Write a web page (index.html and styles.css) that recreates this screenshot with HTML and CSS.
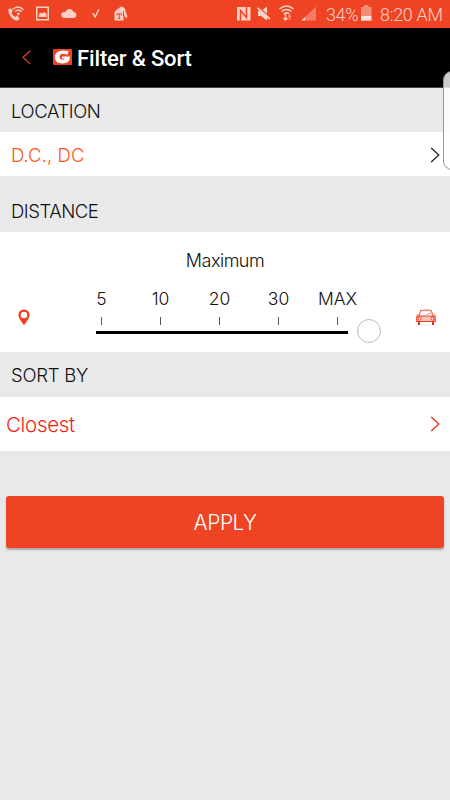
FILE: index.html
```html
<!DOCTYPE html>
<html lang="en">
<head>
<meta charset="utf-8">
<title>Filter &amp; Sort</title>
<link rel="stylesheet" href="styles.css">
</head>
<body>
<main class="screen">
  <div class="status">
    <svg class="status-left" width="140" height="28" viewBox="0 0 140 28" aria-hidden="true">
      <g fill="#fbd0c6">
        <path d="M8.200 9.500l2.500-1.200 2.200 3-1.500 1.700q1 2.500 3.600 4l1.800-1.200 2.700 2.300-1.400 2.300q-3.300 1-7-3.200-3-3.800-2.900-7.700z"/>
        <circle cx="18.300" cy="14" r="1.400"/>
        <path d="M12.500 9.500q5.500-5 11 .2M15 11.500q3.500-2.800 6.700.2" fill="none" stroke="#fbd0c6" stroke-width="1.500"/>
        <path d="M36 6.500h13v14H36zM37.500 8v11h10V8z" fill-rule="evenodd"/>
        <path d="M39 17v-3l2-1.500 1.500 1 2-1.500 2 2v3z"/>
        <path d="M64.500 18a3 3 0 0 1-.5-6q1.500-.2 1.500 0 1-3 4-3 3 0 3.800 3 3 0 3 3 0 3-3 3z"/>
        <path d="M92.800 13l2.300 4 3.700-7.500" fill="none" stroke="#fbd0c6" stroke-width="1.500"/>
        <path d="M114.500 12l3.500-3.500h3l2.500 2.500v9.500h-9z"/>
        <path d="M119 8q2.500-3 5.500 0l3 9-1.800 1-3.200-6.500z"/>
      </g>
      <path d="M117 15.500v-1.700h4.500v1.700M119.250 14v4.500M118 18.500h2.500M123.500 11v5" fill="none" stroke="#ef4423"/>
    </svg>
    <svg class="status-signal" width="85" height="28" viewBox="0 0 85 28" aria-hidden="true">
      <path d="M2 7h13.500v13.500H2z" fill="#fbd0c6"/>
      <path d="M5.500 20.500v-10l6 7V7" fill="none" stroke="#ef4423" stroke-width="1.500"/>
      <path d="M23 11h3l6-4.500v14L26 16h-3z" fill="#fbd0c6"/>
      <path d="M23.500 7l11.500 10.500" stroke="#ef4423" stroke-width="1.300"/>
      <path d="M22.500 7.800l12.500 11.200" stroke="#fbd0c6" stroke-width="1.700"/>
      <path d="M44.500 9q7-6 14 0M46.500 11.500q5-4 10 0M48.700 14q2.800-2.300 5.600 0" fill="none" stroke="#fbd0c6" stroke-width="1.500"/>
      <path d="M50.500 14v6m-2-2l2 2 2-2" fill="none" stroke="#fbd0c6" stroke-width="1.400"/>
      <path d="M54.500 20v-5m-1.500 2l1.500-2 1.700 2" fill="none" stroke="#f58c76" stroke-width="1.300"/>
      <path d="M81 6.500v14H66.500z" fill="#f47c65"/>
      <path d="M70 17v3.500h-3.500z" fill="#fbd0c6"/>
    </svg>
    <span class="percent">34%</span>
    <svg class="battery" width="11" height="28" viewBox="0 0 11 28" aria-hidden="true">
      <path d="M0 7h3V5h4.500v2h3v9H0z" fill="#f58c76"/>
      <path d="M0 16h10.500v4.700H0z" fill="#fde3dc"/>
    </svg>
    <span class="clock">8:20 AM</span>
  </div>

  <header class="appbar">
    <svg class="back" width="9" height="15" viewBox="0 0 9 15" aria-hidden="true"><path d="M8.200.8L1 7.300l7.200 6.800"/></svg>
    <svg class="logo" width="19" height="16" viewBox="0 0 19 16" aria-hidden="true">
      <rect width="19" height="16" rx="1" fill="#ef4423"/>
      <path d="M15.500 1.500L14.500 6Q12.500 4.800 10 4.800 6.800 4.800 6.500 8 6.500 10.500 9.500 10.700 11.700 10.700 12 9.800H9V7.500h8Q17 14.500 9.500 14.500 2 14.300 1.800 8.500 2 2 9.500 1.500 12 1.300 13.500 2.200z" fill="#fff"/>
    </svg>
    <h1 class="title">Filter &amp; Sort</h1>
  </header>

  <h2 class="heading heading-location"><span class="t-location">LOCATION</span></h2>
  <div class="row row-location">
    <span class="t-city">D.C., DC</span>
    <svg class="chevron" width="11" height="16" viewBox="0 0 11 16" aria-hidden="true"><path d="M1.200 1l7.600 7-7.600 7"/></svg>
  </div>

  <h2 class="heading heading-distance"><span class="t-distance">DISTANCE</span></h2>
  <section class="distance">
    <div class="maximum">Maximum</div>
    <div class="range">
      <svg class="pin" width="12" height="17" viewBox="0 0 12 17" aria-hidden="true">
        <path fill-rule="evenodd" d="M6 .5A5.500 5.500 0 0 0 .4 6Q.4 9 6 16.300 11.600 9 11.600 6A5.500 5.500 0 0 0 6 .5zM6 2.700a3.300 3.300 0 1 1 0 6.600 3.300 3.300 0 0 1 0-6.600z"/>
      </svg>
      <div class="slider">
        <div class="scale">
          <span class="stop">5</span><span class="stop">10</span><span class="stop">20</span><span class="stop">30</span><span class="stop">MAX</span>
        </div>
        <div class="track-line"><div class="track"></div><div class="thumb"></div></div>
      </div>
      <svg class="car" width="20" height="17" viewBox="0 0 20 17" aria-hidden="true">
        <path d="M2.700 7.500L4.800 1.500q5-.8 10.300 0l2.200 6" fill="none" stroke="#f0614a" stroke-width="1.100"/>
        <path d="M.8 8l2-1h14.400l2 1v4.500H.8z" fill="#fbc4bb" stroke="#ee3f24" stroke-width="1.200"/>
        <path d="M7 1.500h3.500M11 6q1.500-3 4-1" fill="none" stroke="#f48c7c"/>
        <circle cx="3.500" cy="9.700" r="1.500" fill="#fff" stroke="#ee3f24"/>
        <circle cx="16.500" cy="9.700" r="1.500" fill="#fff" stroke="#ee3f24"/>
        <path d="M.5 6h1.800M17.700 6h1.800" stroke="#ee3f24"/>
        <path d="M2 13h2v3H2zM16 13h2v3h-2z" fill="#e92d15"/>
      </svg>
    </div>
  </section>

  <h2 class="heading heading-sort"><span class="t-sort">SORT BY</span></h2>
  <div class="row row-sort">
    <span class="t-closest">Closest</span>
    <svg class="chevron chevron-red" width="11" height="16" viewBox="0 0 11 16" aria-hidden="true"><path d="M1.200 1l7.600 7-7.600 7"/></svg>
  </div>

  <button class="apply" type="button"><span class="t-apply">APPLY</span></button>
  <div class="edge-handle"></div>
</main>
</body>
</html>
```
FILE: styles.css
```css
* { box-sizing: border-box; }
body { margin: 0; background: #e9e9e9; }
.screen {
  position: relative;
  width: 450px;
  height: 800px;
  overflow: hidden;
  background: #e9e9e9;
  font-family: Inter, "Liberation Sans", sans-serif;
  font-weight: 300;
  color: #111;
}
svg { display: block; flex: none; }
.status {
  display: flex;
  height: 28px;
  background: #ef4423;
  color: #fbd0c6;
  font: 300 18px/29px Roboto, sans-serif;
  white-space: nowrap;
}
.status-signal { margin-left: 95px; }
.percent { width: 35px; margin-left: 6px; letter-spacing: -0.4px; }
.clock { margin-left: 8px; letter-spacing: -0.3px; }
.appbar {
  display: flex;
  align-items: center;
  height: 60px;
  padding: 0 0 0 22px;
  background: #000;
  border-bottom: 1px solid #4a4444;
}
.back { fill: none; stroke: #e64225; stroke-width: 1.2; }
.logo { margin-left: 22px; margin-top: -2px; }
.title {
  margin: 2px 0 0 5px;
  color: #fff;
  font: 500 22px/30px Roboto, sans-serif;
  letter-spacing: -0.15px;
}
.heading {
  display: flex;
  align-items: center;
  margin: 0;
  padding: 1px 0 0 11px;
  font-size: 18.5px;
  font-weight: 300;
}
.heading-location { height: 44px; }
.heading-distance { height: 56px; padding-top: 13px; }
.heading-sort { height: 45px; }
.t-location { letter-spacing: -0.4px; }
.t-distance { letter-spacing: -0.45px; }
.t-sort { letter-spacing: -0.25px; }
.row {
  display: flex;
  align-items: center;
  justify-content: space-between;
  padding: 0 9px 0 11px;
  background: #fff;
}
.row-location { height: 44px; padding-top: 1px; font-size: 18.5px; color: #ff5514; }
.row-sort { height: 54px; padding-left: 6px; font-size: 20.5px; color: #f51d10; }
.t-city { letter-spacing: 0.1px; }
.t-closest { letter-spacing: -0.3px; }
.chevron { fill: none; stroke: #222; stroke-width: 1.3; }
.chevron-red { stroke: #ee2b1b; }
.distance { height: 120px; padding-top: 16px; background: #fff; }
.maximum { height: 25px; line-height: 26px; font-size: 18px; letter-spacing: -0.5px; text-align: center; }
.range { display: flex; padding: 12px 14px 0 18px; }
.pin { margin-top: 24px; fill: #ef3b20; }
.slider { width: 351px; padding-left: 42px; }
.car { margin: 24px 0 0 auto; }
.scale { display: grid; grid-template-columns: repeat(5, 59px); height: 41px; }
.stop {
  display: flex;
  flex-direction: column;
  align-items: center;
  font-size: 17.5px;
  line-height: 28px;
}
.stop::after { content: ""; width: 1px; height: 8px; margin-top: 4px; background: #555; }
.track-line { display: flex; align-items: center; height: 26px; margin: -8px 0 0 24px; }
.track { flex: none; width: 252px; height: 3px; margin-top: 3px; background: #000; }
.thumb { flex: none; width: 24px; height: 24px; margin-left: 9px; border: 1.5px solid #bbb; border-radius: 50%; background: #fff; }
.apply {
  display: block;
  width: 438px;
  height: 52px;
  margin: 45px 0 0 6px;
  padding: 0;
  border: 0;
  border-radius: 3px;
  background: #ef4423;
  box-shadow: 0 2px 2px #aaa;
  color: #fff;
  font: 300 21px/54px Inter, "Liberation Sans", sans-serif;
}
.t-apply { letter-spacing: -0.5px; }
.edge-handle {
  position: absolute;
  left: 443px;
  top: 71px;
  width: 20px;
  height: 99px;
  border: 1px solid #999;
  border-radius: 9px;
  background: rgba(255, 255, 255, 0.8);
}
```
